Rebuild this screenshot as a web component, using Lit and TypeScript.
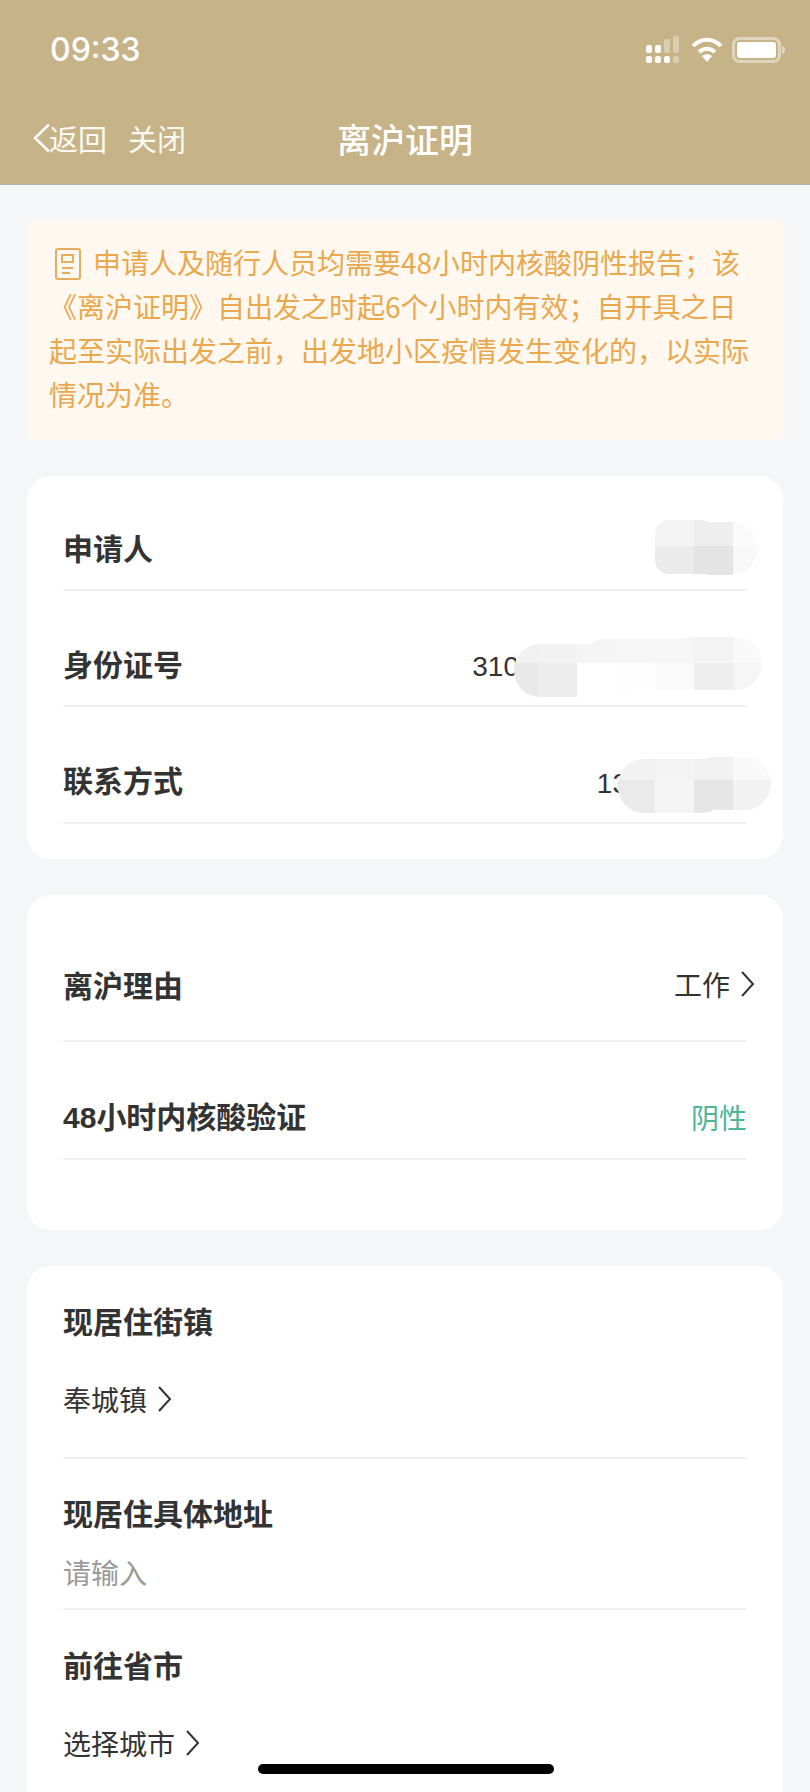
import { css, html, LitElement, svg } from 'lit';
import { customElement } from 'lit/decorators.js';

const chevron = html`<svg class="chev" width="15" height="28" viewBox="0 0 15 28"><path d="M2 2l11 12L2 26" fill="none" stroke="#333" stroke-width="2"/></svg>`;

// mosaic redaction blobs, coords relative to each svg
type Blob = { w: number; h: number; cls: string; pills: number[][]; xs: number[]; split: number; top: string[]; bottom: string[] };

const blobs: Blob[] = [
  {
    w: 102, h: 55, cls: 'blur-a',
    pills: [[0, 0, 60, 54, 14], [30, 2, 72, 53, 26]],
    xs: [0, 39, 78, 102], split: 26,
    top: ['#f3f3f3', '#eeeeee', '#fafafa'],
    bottom: ['#ebebeb', '#e4e4e4', '#f8f8f8'],
  },
  {
    w: 248, h: 60, cls: 'blur-b',
    pills: [[0, 7, 130, 53, 26], [70, 2, 120, 50, 20], [150, 0, 98, 53, 26]],
    xs: [0, 24, 63, 102, 141, 180, 219, 248], split: 26,
    top: ['#f1f1f1', '#f2f2f2', '#f5f5f5', '#f6f6f6', '#f6f6f6', '#f3f3f3', '#f9f9f9'],
    bottom: ['#e9e9e9', '#ececec', '#ffffff', '#fefefe', '#fafafa', '#eeeeee', '#f6f6f6'],
  },
  {
    w: 153, h: 56, cls: 'blur-c',
    pills: [[0, 2, 110, 54, 26], [70, 0, 83, 53, 26]],
    xs: [0, 37, 76, 115, 153], split: 23,
    top: ['#f2f2f2', '#f3f3f3', '#f1f1f1', '#f9f9f9'],
    bottom: ['#eaeaea', '#f5f5f5', '#e6e6e6', '#f2f2f2'],
  },
];

function blurBlob(b: Blob) {
  const id = `clip-${b.cls}`;
  return html`<svg class="blur ${b.cls}" width=${b.w} height=${b.h} viewBox="0 0 ${b.w} ${b.h}">
    <clipPath id=${id}>
      ${b.pills.map(p => svg`<rect x=${p[0]} y=${p[1]} width=${p[2]} height=${p[3]} rx=${p[4]}/>`)}
    </clipPath>
    <g clip-path="url(#${id})">
      ${b.top.map((c, i) => svg`<rect x=${b.xs[i]} y="0" width=${b.xs[i + 1] - b.xs[i]} height=${b.split} fill=${c}/>`)}
      ${b.bottom.map((c, i) => svg`<rect x=${b.xs[i]} y=${b.split} width=${b.xs[i + 1] - b.xs[i]} height=${b.h - b.split} fill=${c}/>`)}
    </g>
  </svg>`;
}

@customElement('app-root')
export class AppRoot extends LitElement {
  static styles = css`
    :host {
      display: block;
      position: relative;
      width: 810px;
      height: 1792px;
      overflow: hidden;
      background: #f5f6f8;
      font-family: "Noto Sans CJK SC", "Noto Sans", sans-serif;
      color: #333;
    }

    .header {
      box-sizing: border-box;
      height: 185px;
      background: #c6b387;
      color: #fff;
      border-bottom: 1px solid #b5b0a4;
    }

    .status {
      display: flex;
      justify-content: space-between;
      align-items: center;
      height: 98px;
      padding: 0 24px 0 50px;
    }

    .time {
      font-family: Inter, sans-serif;
      font-size: 32px;
      font-weight: 500;
    }

    .status-icons {
      display: flex;
      align-items: center;
      margin-top: 2px;
    }

    .wifi {
      margin: 0 9px 0 12px;
    }

    .nav {
      position: relative;
      display: flex;
      align-items: center;
      height: 80px;
      padding-left: 32px;
      font-size: 29px;
      color: #fbf9f4;
    }

    .nav .back {
      margin-right: -3px;
    }

    .nav .close {
      margin-left: 21px;
    }

    .title {
      position: absolute;
      left: 0;
      right: 0;
      text-align: center;
      font-size: 34px;
      font-weight: 500;
      color: #fff;
    }

    .content {
      display: flex;
      flex-direction: column;
      gap: 36px;
      padding: 34px 27px 0;
    }

    .notice {
      box-sizing: border-box;
      height: 221px;
      padding: 21px 22px;
      background: #fff8f1;
      border-radius: 6px;
      color: #e9a84d;
      font-size: 28px;
      line-height: 44px;
    }

    .notice svg {
      vertical-align: -6px;
      margin-right: 12px;
      margin-left: 6px;
    }

    .card {
      background: #fff;
      border-radius: 24px;
      padding: 0 36px;
    }

    .card-id {
      height: 383px;
    }

    .card-reason {
      height: 335px;
    }

    .card-address {
      height: 600px;
    }

    .row {
      position: relative;
      box-sizing: border-box;
      display: flex;
      justify-content: space-between;
      align-items: center;
      border-bottom: 2px solid #f0f0f0;
    }

    .label {
      font-size: 30px;
      font-weight: 600;
      line-height: 40px;
    }

    .latin {
      font-family: "Liberation Sans", sans-serif;
      font-weight: 700;
    }

    .value {
      font-size: 28px;
      line-height: 40px;
      display: flex;
      align-items: center;
    }

    .num {
      font-family: "Liberation Sans", sans-serif;
      padding-top: 9px;
    }

    .num-id {
      margin-right: 228px;
    }

    .num-phone {
      margin-right: 119px;
    }

    .chev {
      margin-left: 10px;
      margin-right: -8px;
    }

    .block .chev {
      margin-right: 0;
    }

    .row-name {
      height: 115px;
      padding-top: 29px;
    }

    .row-id {
      height: 116px;
      padding-top: 29px;
    }

    .row-phone {
      height: 117px;
      padding-top: 29px;
    }

    .reason-first {
      height: 147px;
      padding-top: 33px;
    }

    .reason-second {
      height: 118px;
      padding-top: 33px;
    }

    .ok {
      color: #4fb598;
    }

    .block {
      box-sizing: border-box;
      border-bottom: 2px solid #f0f0f0;
    }

    .block-town {
      height: 193px;
      padding-top: 34px;
    }

    .block-town .value {
      margin-top: 39px;
    }

    .block-addr {
      height: 151px;
      padding-top: 33px;
    }

    .block-addr .value {
      margin-top: 20px;
      color: #999;
    }

    .block-dest {
      border: 0;
      padding-top: 34px;
    }

    .block-dest .value {
      margin-top: 39px;
    }

    .blur {
      position: absolute;
    }

    .blur-a {
      right: -10px;
      top: 44px;
    }

    .blur-b {
      right: -15px;
      top: 46px;
    }

    .blur-c {
      right: -24px;
      top: 50px;
    }

    .home-bar {
      position: absolute;
      left: 258px;
      top: 1764px;
      width: 296px;
      height: 10px;
      border-radius: 5px;
      background: #000;
    }
  `;

  _statusIcons() {
    return html`
      <div class="status-icons">
        <svg width="33" height="28" viewBox="0 0 33 28" fill="#fff">
          <rect x="0" y="9" width="6" height="8" rx="2"/>
          <rect x="9" y="9" width="6" height="8" rx="2"/>
          <rect x="18" y="3" width="6" height="14" rx="2" opacity=".35"/>
          <rect x="27" y="0" width="6" height="17" rx="2" opacity=".35"/>
          <rect x="0" y="20" width="6" height="7" rx="2"/>
          <rect x="9" y="20" width="6" height="7" rx="2"/>
          <rect x="18" y="20" width="6" height="7" rx="2"/>
          <rect x="27" y="20" width="6" height="7" rx="2" opacity=".35"/>
        </svg>
        <svg class="wifi" width="32" height="26" viewBox="0 0 32 26" fill="none" stroke="#fff" stroke-width="4">
          <path d="M2 9c8-8.500 20-8.500 28 0"/>
          <path d="M8 15c4.800-4.500 11.200-4.500 16 0"/>
          <path d="M11 19l5 6 5-6c-3-2.500-7-2.500-10 0z" fill="#fff" stroke="none"/>
        </svg>
        <svg width="54" height="26" viewBox="0 0 54 26">
          <rect x="1.500" y="1.500" width="46" height="23" rx="6" fill="none" stroke="#fff" stroke-opacity=".45" stroke-width="3"/>
          <rect x="5" y="5" width="39" height="16" rx="3" fill="#fff"/>
          <path d="M50 9c2 .5 3 2 3 4s-1 3.500-3 4z" fill="#fff" fill-opacity=".45"/>
        </svg>
      </div>
    `;
  }

  render() {
    return html`
      <div class="header">
        <div class="status">
          <span class="time">09:33</span>
          ${this._statusIcons()}
        </div>
        <div class="nav">
          <svg class="back" width="20" height="30" viewBox="0 0 20 30"><path d="M17 1.500L3 15l14 13.500" fill="none" stroke="#fff" stroke-width="2.500"/></svg>
          <span>返回</span>
          <span class="close">关闭</span>
          <span class="title">离沪证明</span>
        </div>
      </div>

      <div class="content">
        <div class="notice">
          <svg width="26" height="32" viewBox="0 0 26 32" fill="none" stroke="#e5ad5c" stroke-width="2">
            <rect x="1" y="1" width="24" height="30" rx="2"/>
            <rect x="7" y="7" width="11" height="7"/>
            <path d="M7 20h11M7 25h8"/>
          </svg>申请人及随行人员均需要48小时内核酸阴性报告；该《离沪证明》自出发之时起6个小时内有效；自开具之日起至实际出发之前，出发地小区疫情发生变化的，以实际情况为准。
        </div>

        <div class="card card-id">
          <div class="row row-name">
            <span class="label">申请人</span>
            ${blurBlob(blobs[0])}
          </div>
          <div class="row row-id">
            <span class="label">身份证号</span>
            <span class="value num num-id">310</span>
            ${blurBlob(blobs[1])}
          </div>
          <div class="row row-phone">
            <span class="label">联系方式</span>
            <span class="value num num-phone">13</span>
            ${blurBlob(blobs[2])}
          </div>
        </div>

        <div class="card card-reason">
          <div class="row reason-first">
            <span class="label">离沪理由</span>
            <span class="value">工作${chevron}</span>
          </div>
          <div class="row reason-second">
            <span class="label"><span class="latin">48</span>小时内核酸验证</span>
            <span class="value ok">阴性</span>
          </div>
        </div>

        <div class="card card-address">
          <div class="block block-town">
            <div class="label">现居住街镇</div>
            <div class="value">奉城镇${chevron}</div>
          </div>
          <div class="block block-addr">
            <div class="label">现居住具体地址</div>
            <div class="value">请输入</div>
          </div>
          <div class="block block-dest">
            <div class="label">前往省市</div>
            <div class="value">选择城市${chevron}</div>
          </div>
        </div>
      </div>

      <div class="home-bar"></div>
    `;
  }
}
